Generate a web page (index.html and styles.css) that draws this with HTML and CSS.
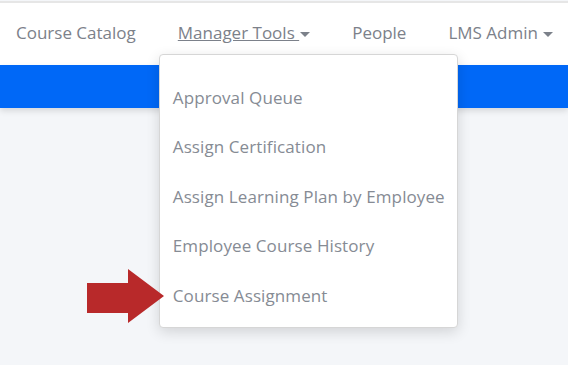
FILE: index.html
```html
<!DOCTYPE html>
<html lang="en">
<head>
    <meta charset="UTF-8">
    <meta name="viewport" content="width=device-width, initial-scale=1.0">
    <title>LMS - Manager Tools</title>
    <link rel="stylesheet" href="styles.css">
</head>
<body>
    <header class="topbar">
        <nav class="nav">
            <a href="#" class="nav-link">Course Catalog</a>
            <div class="nav-item">
                <a href="#" class="nav-link open">Manager Tools <span class="caret"></span></a>
                <ul class="dropdown">
                    <li><a href="#">Approval Queue</a></li>
                    <li><a href="#">Assign Certification</a></li>
                    <li><a href="#">Assign Learning Plan by Employee</a></li>
                    <li><a href="#">Employee Course History</a></li>
                    <li><a href="#">Course Assignment</a></li>
                </ul>
            </div>
            <a href="#" class="nav-link">People</a>
            <a href="#" class="nav-link">LMS Admin <span class="caret"></span></a>
        </nav>
    </header>
    <div class="banner"></div>
    <main class="content"></main>

    <svg class="pointer" width="78" height="56" viewBox="0 0 78 56">
        <polygon points="0,14 41,14 41,0 77,27 41,54 41,44 0,44" fill="#b8292a"/>
    </svg>
</body>
</html>
```

FILE: styles.css
```css
body {
    margin: 0;
    font-family: "Open Sans", Arial, sans-serif;
    background-color: #f4f6f9;
    color: #868b94;
    height: 365px;
    overflow: hidden;
    position: relative;
}
.topbar {
    background-color: #fff;
    border-top: 2px solid #e6e6e6;
    margin-top: 1px;
    height: 62px;
}
.nav {
    display: flex;
    align-items: center;
    height: 100%;
    box-sizing: border-box;
    padding: 0 0 3px 16px;
    gap: 42px;
}
.nav-item {
    position: relative;
}
.nav-link {
    font-size: 17px;
    color: #7c818a;
    text-decoration: none;
    white-space: nowrap;
}
.nav-link.open {
    text-decoration: underline;
}
.caret {
    display: inline-block;
    width: 0;
    height: 0;
    border-left: 5px solid transparent;
    border-right: 5px solid transparent;
    border-top: 5px solid #7c818a;
    vertical-align: middle;
    margin-left: 1px;
}
.banner {
    height: 43px;
    background-color: #0068f7;
    box-shadow: 0 3px 6px rgba(0, 0, 0, 0.12);
}
.dropdown {
    position: absolute;
    top: 32.5px;
    left: -19px;
    width: 297px;
    margin: 0;
    padding: 18px 0 7px;
    list-style: none;
    background-color: #fff;
    border: 1px solid #d6d6d6;
    border-radius: 4px;
    box-shadow: 0 4px 14px rgba(0, 0, 0, 0.14);
    z-index: 2;
}
.dropdown a {
    display: block;
    line-height: 49.5px;
    padding: 0 13px;
    font-size: 17px;
    letter-spacing: 0.1px;
    color: #868b94;
    text-decoration: none;
    white-space: nowrap;
}
.pointer {
    position: absolute;
    left: 87px;
    top: 269px;
    z-index: 3;
}
```
